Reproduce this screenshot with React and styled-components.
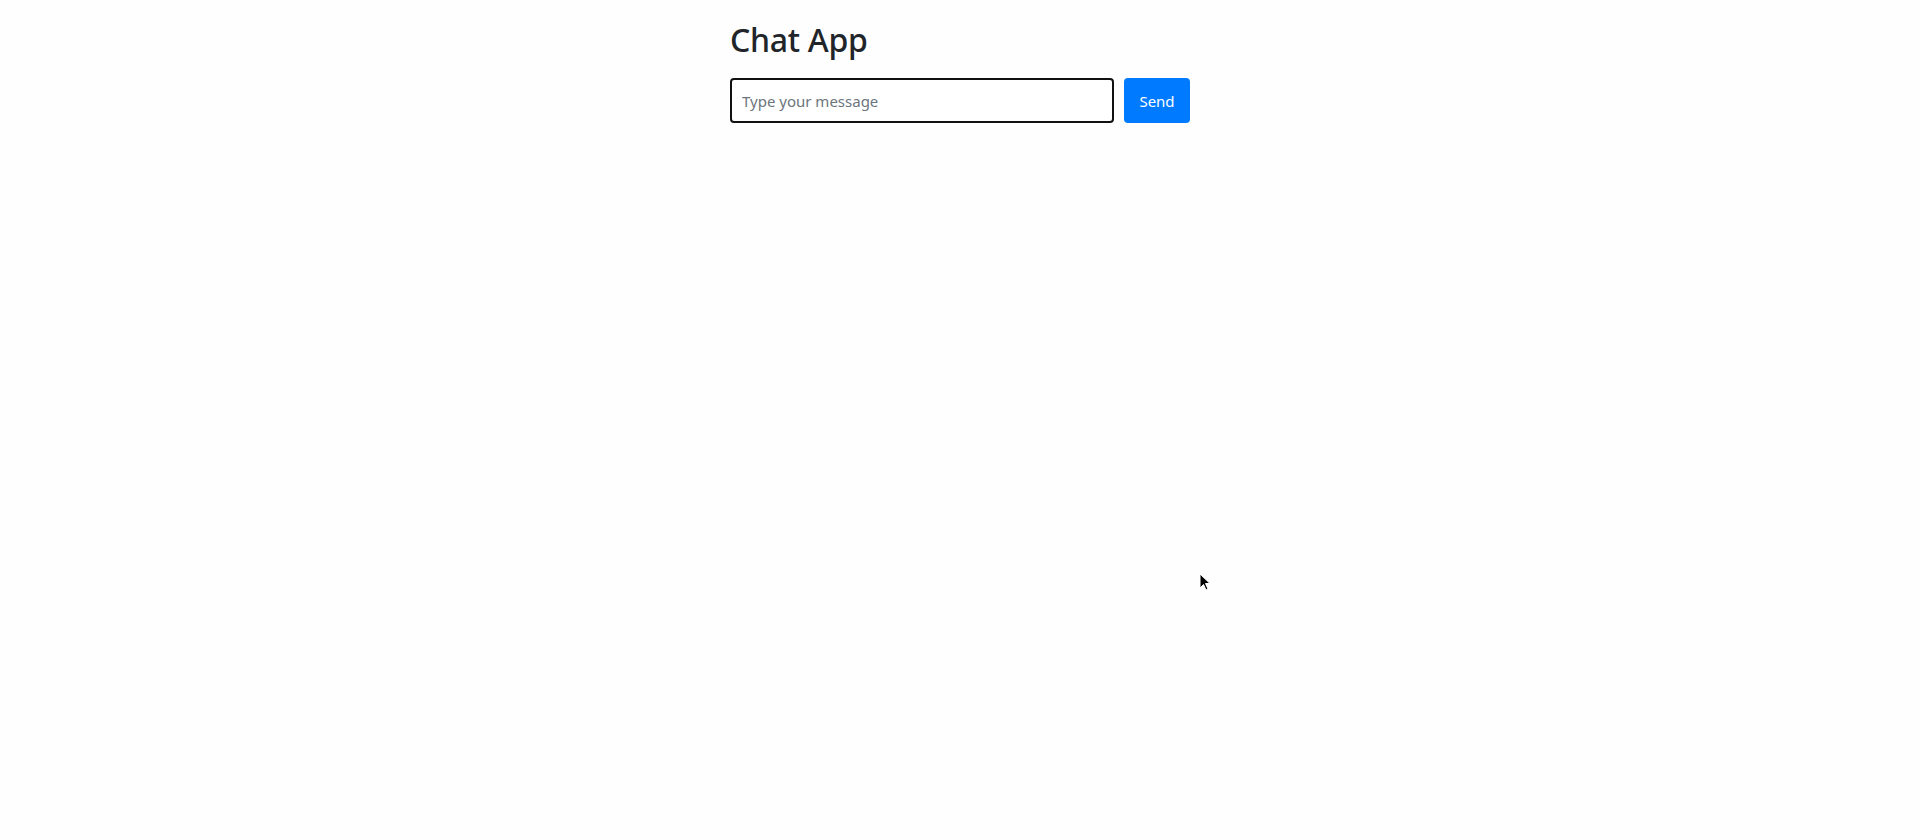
import styled, { createGlobalStyle } from 'styled-components';

const GlobalStyle = createGlobalStyle`
  html, body { margin: 0; padding: 0; background: #fefefe; }
  body { font-family: "Noto Sans", "Open Sans", sans-serif; color: #212529; }
`;

const Page = styled.div`width:1920px;height:840px;position:relative;overflow:hidden;`;
const Container = styled.main`width:460px;margin:0 auto;padding-top:21px;display:flex;flex-direction:column;gap:19px;`;
const Title = styled.h2`margin:0;font-size:32px;font-weight:500;line-height:1.2;letter-spacing:-0.3px;color:#212529;`;
const Form = styled.form`display:flex;gap:10px;align-items:stretch;`;
const Input = styled.input`flex:1;height:45px;box-sizing:border-box;border:2px solid #111;border-radius:4px;padding:0 10px;font-family:inherit;font-size:15px;background:#fff;outline:none;
  &::placeholder{color:#6c757d;}`;
const SendButton = styled.button`width:66px;height:45px;border:none;border-radius:4px;background:#007bff;color:#fff;font-family:inherit;font-size:15px;cursor:pointer;`;
const Cursor = styled.svg`position:absolute;left:1199px;top:573px;`;

export default function App() {
    return (
        <Page>
            <GlobalStyle />
            <Container>
                <Title>Chat App</Title>
                <Form onSubmit={(e) => e.preventDefault()}>
                    <Input type="text" placeholder="Type your message" />
                    <SendButton type="submit">Send</SendButton>
                </Form>
            </Container>
            <Cursor width="12" height="20" viewBox="0 0 12 20">
                <path d="M1 1 L1 15 L4.5 11.5 L7 17 L9 16 L6.5 10.5 L11 10.5 Z" fill="#000" stroke="#fff" strokeWidth="1" />
            </Cursor>
        </Page>
    );
}
